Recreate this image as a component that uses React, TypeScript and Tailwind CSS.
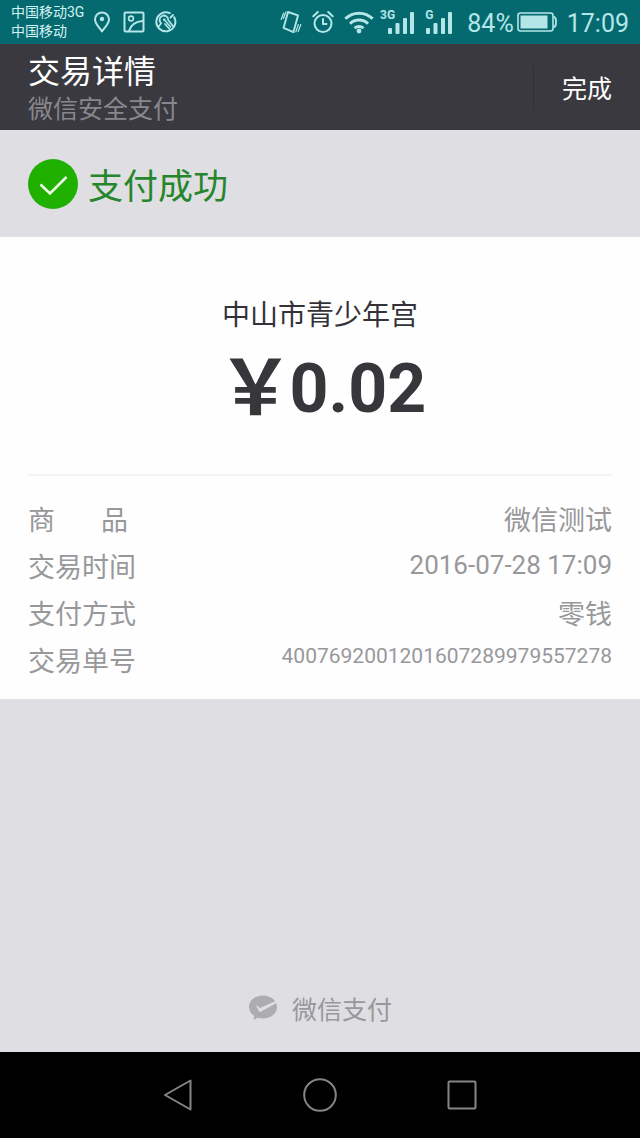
import React from "react";

const stroke = {
  fill: "none",
  stroke: "currentColor",
  strokeWidth: 2,
  strokeLinecap: "round",
  strokeLinejoin: "round",
} as const;

function PinIcon() {
  return (
    <svg viewBox="0 0 22 22" className="size-[22px]" aria-hidden="true" {...stroke}>
      <path d="M11 20.500C8.500 16.800 4 12.600 4 8.400a7 7 0 0 1 14 0c0 4.200-4.500 8.400-7 12.100z" />
      <circle cx="11" cy="8" r="2.200" fill="currentColor" stroke="none" />
    </svg>
  );
}

function PictureIcon() {
  return (
    <svg viewBox="0 0 22 22" className="size-[22px]" aria-hidden="true" {...stroke}>
      <rect x="1.500" y="1.500" width="19" height="19" rx="1" />
      <circle cx="8" cy="7.500" r="2.400" strokeWidth="1.600" />
      <path d="M6 20c1.500-5.500 6.500-9.500 14-10" />
    </svg>
  );
}

function CleanerIcon() {
  return (
    <svg viewBox="0 0 22 22" className="size-[22px]" aria-hidden="true" {...stroke}>
      <path d="M14.800 2.200A9.500 9.500 0 1 0 19.200 6.300" />
      <path d="M6.200 12.200A4.300 4.300 0 1 1 13.200 9l5 6.500M10 13l4.500 5M15.500 6.500l2.500-2.500M3.500 15.500l2.700-3.300" strokeWidth="1.800" />
      <circle cx="9.300" cy="8.800" r="1.400" fill="currentColor" stroke="none" />
      <path d="M10.500 10l5 6" strokeWidth="1.600" />
    </svg>
  );
}

function VibrateIcon() {
  return (
    <svg viewBox="0 0 22 24" className="h-6 w-[22px]" aria-hidden="true" {...stroke} strokeWidth="1.900">
      <path d="M8 2l10 3.400-4.600 16.800L3.600 17.800z" />
      <path d="M3.600 3L1.200 9.500M6 1.800L3.400 8.500M20.800 14.500L18.200 21.500M18.400 14.500L15.800 22" strokeWidth="1.200" />
    </svg>
  );
}

function AlarmIcon() {
  return (
    <svg viewBox="0 0 22 24" className="h-6 w-[22px]" aria-hidden="true" {...stroke}>
      <circle cx="11" cy="13.500" r="8.500" />
      <path d="M11 9v5h3.500M1.300 6.200L5.800 2M20.700 6.200L16.200 2" />
    </svg>
  );
}

function WifiIcon() {
  return (
    <svg viewBox="0 0 30 24" className="h-6 w-[30px]" aria-hidden="true" {...stroke} strokeWidth="3" strokeLinecap="butt">
      <path d="M1.300 8.800a19.500 19.500 0 0 1 27.400 0M6 13.800a12.800 12.800 0 0 1 18 0M10.600 18.300a6.300 6.300 0 0 1 8.800 0" />
      <circle cx="15" cy="21" r="2.400" fill="currentColor" stroke="none" />
    </svg>
  );
}

function Signal({ label }: { label: string }) {
  return (
    <span className="flex items-start">
      <span className="text-xs leading-3 font-bold">{label}</span>
      <svg viewBox="0 0 28 26" className="-ml-2 h-[26px] w-7" fill="currentColor" aria-hidden="true">
        <rect x="1" y="19" width="4" height="6" rx="1" />
        <rect x="8.500" y="14" width="4" height="11" rx="1" />
        <rect x="16" y="9" width="4" height="16" rx="1" />
        <rect x="23" y="3" width="4" height="22" rx="1" />
      </svg>
    </span>
  );
}

function BatteryIcon() {
  return (
    <svg viewBox="0 0 40 20" className="h-5 w-10" aria-hidden="true">
      <rect x="1" y="1" width="35" height="18" rx="2.500" fill="none" stroke="currentColor" strokeWidth="1.600" />
      <path d="M36.500 4.500C39 5.500 39 7 39 10s0 4.500-2.500 5.500" fill="none" stroke="currentColor" strokeWidth="1.800" />
      <rect x="3.500" y="3.500" width="27" height="13" fill="currentColor" />
    </svg>
  );
}

export default function App() {
  return (
    <div className="flex min-h-screen flex-col bg-[#dfdee2] font-['Noto_Sans_CJK_SC',sans-serif]">
      <div className="flex h-11 items-center justify-between bg-[#046a70] px-[11px] font-[Roboto,'Noto_Sans_CJK_SC',sans-serif] text-[#b4e6e8]">
        <div className="flex items-center gap-[10px]">
          <div className="-mr-[3px] text-sm leading-[19px] text-[#d5f2f3]">
            <div>中国移动3G</div>
            <div>中国移动</div>
          </div>
          <PinIcon />
          <PictureIcon />
          <CleanerIcon />
        </div>
        <div className="flex items-center gap-[10px]">
          <VibrateIcon />
          <AlarmIcon />
          <WifiIcon />
          <div className="-ml-1 flex gap-[10px] pr-1">
            <Signal label="3G" />
            <Signal label="G" />
          </div>
          <div className="flex items-center gap-[3px] text-[25px] leading-8">
            <span className="pt-1">84%</span>
            <BatteryIcon />
          </div>
          <time className="pt-1 text-[25px] leading-8">17:09</time>
        </div>
      </div>

      <header className="flex h-[86px] items-center justify-between bg-[#3a393f] px-7">
        <div>
          <h1 className="text-[32px] leading-10 text-white">交易详情</h1>
          <p className="text-[25px] leading-9 text-[#88878d]">微信安全支付</p>
        </div>
        <button type="button" className="border-l border-[#313036] py-1 pl-7 text-[25px] leading-9 text-white">
          完成
        </button>
      </header>

      <main className="flex flex-1 flex-col">
        <section className="flex h-[107px] items-center gap-[10px] px-7">
          <svg viewBox="0 0 50 50" className="size-[50px]" aria-hidden="true">
            <circle cx="25" cy="25" r="25" fill="#1fb000" />
            <path d="M12.500 25.500l9.500 9L38.500 18" fill="none" stroke="#eefbea" strokeWidth="2.600" />
          </svg>
          <h2 className="text-[35px] leading-[44px] text-[#25862b]">支付成功</h2>
        </section>

        <section className="bg-[#fefefe] px-7 pt-14 pb-4">
          <p className="text-center text-[28px] leading-10 text-[#333238]">中山市青少年宫</p>
          <p className="mt-4 flex items-center justify-center pl-1 text-[68px] leading-20 font-bold text-[#37363b]">
            <span className="-mr-1 font-[Roboto,'Noto_Sans_CJK_SC',sans-serif] text-[76px]">￥</span>
            <span className="font-[Roboto,sans-serif]">0.02</span>
          </p>
          <dl className="mt-[45px] border-t-2 border-[#f3f3f4] pt-[19px] text-[27px] leading-[47px] text-[#98989b]">
            <div className="flex justify-between">
              <dt className="flex w-[100px] justify-between">
                <span>商</span>
                <span>品</span>
              </dt>
              <dd>微信测试</dd>
            </div>
            <div className="flex justify-between">
              <dt>交易时间</dt>
              <dd className="font-[Roboto,sans-serif] text-[26px]">2016-07-28 17:09</dd>
            </div>
            <div className="flex justify-between">
              <dt>支付方式</dt>
              <dd>零钱</dd>
            </div>
            <div className="flex items-start justify-between">
              <dt>交易单号</dt>
              <dd className="font-[Roboto,sans-serif] text-[21px] leading-10">4007692001201607289979557278</dd>
            </div>
          </dl>
        </section>

        <footer className="mt-auto flex items-center justify-center gap-[14px] pb-[26px] text-[#98979b]">
          <svg viewBox="0 0 30 26" className="h-[26px] w-[30px]" aria-hidden="true">
            <path
              d="M15 .5C7.300.5 1 5.500 1 12c0 3.600 2 6.900 5.200 8.900L5.600 25l4.200-2.200c1.600.5 3.400.7 5.200.7 7.700 0 14-5 14-11.500S22.700.5 15 .5z"
              fill="#adacb0"
            />
            <path d="M7.800 9.800L12.200 13 27.600 6 29 7.800 13 16.600c-1 .5-1.700.4-2.200-.6z" fill="#dfdee2" />
          </svg>
          <span className="text-[25px] leading-9">微信支付</span>
        </footer>
      </main>

      <nav className="flex h-[86px] items-center justify-center gap-[106px] bg-black text-[#858487]">
        <button type="button" aria-label="返回" className="size-9">
          <svg viewBox="0 0 36 36" className="size-9" {...stroke}>
            <path d="M30.500 3.500v29L5 18z" />
          </svg>
        </button>
        <button type="button" aria-label="主屏幕" className="size-9">
          <svg viewBox="0 0 36 36" className="size-9" {...stroke}>
            <circle cx="18" cy="18" r="15.800" />
          </svg>
        </button>
        <button type="button" aria-label="最近任务" className="size-9">
          <svg viewBox="0 0 36 36" className="size-9" {...stroke}>
            <rect x="4.500" y="4.500" width="27" height="27" rx="1" />
          </svg>
        </button>
      </nav>
    </div>
  );
}
